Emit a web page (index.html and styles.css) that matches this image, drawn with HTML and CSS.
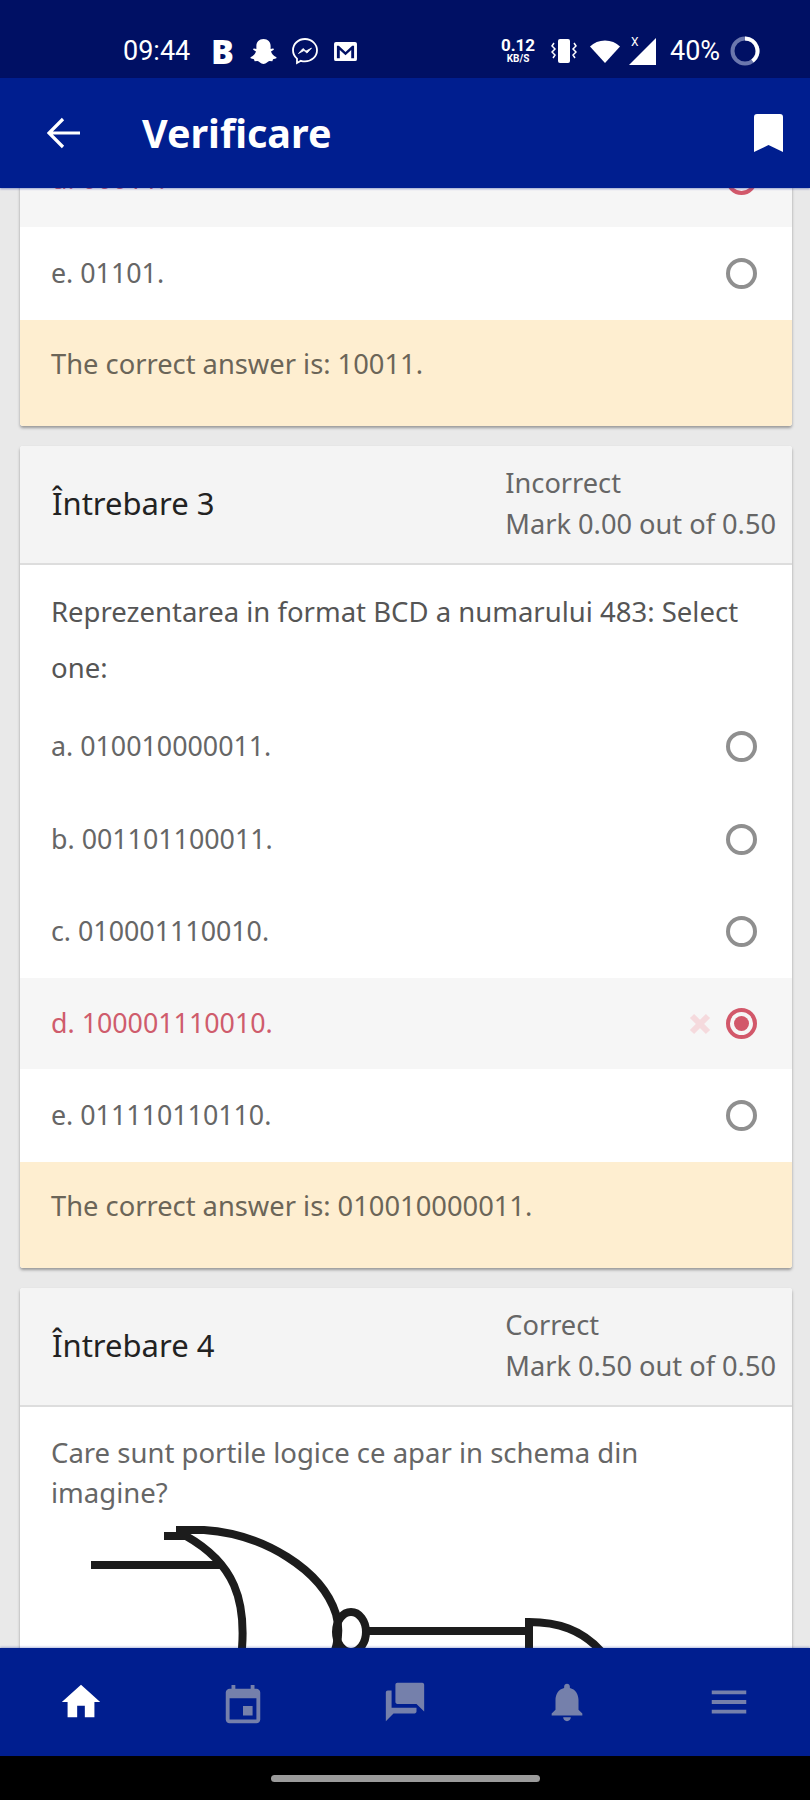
FILE: index.html
```html
<!DOCTYPE html>
<html lang="ro">
<head>
    <meta charset="UTF-8">
    <meta name="viewport" content="width=device-width, initial-scale=1.0">
    <title>Verificare</title>
    <link rel="stylesheet" href="styles.css">
</head>
<body>
    <!-- Bara de stare -->
    <div class="status-bar">
        <span class="clock">09:44</span>
        <span class="letter-b">B</span>
        <svg class="st-snap" viewBox="0 0 28 27"><path d="M14 1c4.600 0 7.400 3.300 7.400 7.300v3.200l2.300-.6c1-.2 1.500 1 .6 1.600l-2.500 1.500c.8 2.600 2.700 4.800 5.200 5.700.9.400.6 1.300-.3 1.600l-2.800.8-.7 2-3-.2c-1.600.2-3.200 2.900-6.200 3.100-3-.2-4.600-2.900-6.200-3.100l-3 .2-.7-2-2.800-.8c-.9-.3-1.200-1.200-.3-1.600 2.500-.9 4.400-3.100 5.200-5.700l-2.500-1.500c-.9-.6-.4-1.800.6-1.600l2.300.6V8.300C6.600 4.300 9.400 1 14 1z" fill="#fff"/></svg>
        <svg class="st-msg" viewBox="0 0 28 28"><path d="M14 2C7.300 2 2 6.900 2 13.300c0 3.400 1.500 6.300 4 8.300V26l3.900-2.200c1.300.4 2.700.6 4.100.6 6.700 0 12-4.900 12-11.100S20.700 2 14 2z" fill="none" stroke="#fff" stroke-width="1.800"/><path d="M7.500 16.500l4.500-5 3 2.600 5.500-3-4.500 5-3-2.600z" fill="#fff" stroke="#fff" stroke-width=".8"/></svg>
        <svg class="st-mail" viewBox="0 0 26 22"><path d="M3 1h20a2 2 0 0 1 2 2v16a2 2 0 0 1-2 2H3a2 2 0 0 1-2-2V3a2 2 0 0 1 2-2zm1 4v13h3V9.500l6 5.500 6-5.500V18h3V5h-2l-7 6.500L6 5z" fill="#fff" fill-rule="evenodd"/></svg>

        <span class="net-speed"><b>0.12</b><i>KB/S</i></span>
        <svg class="st-vib" viewBox="0 0 26 24"><rect x="7" y="0" width="12" height="24" rx="2" fill="#fff"/><path d="M3 4L1 7l3 3-3 3 3 3-2 3M23 4l2 3-3 3 3 3-3 3 2 3" fill="none" stroke="#fff" stroke-width="1.500"/></svg>
        <svg class="st-wifi" viewBox="0 0 30 23"><path d="M0 6.500C4 2.500 9 .5 15 .5s11 2 15 6L15 23z" fill="#fff"/></svg>
        <span class="st-signal">
            <svg viewBox="0 0 27 27"><path d="M27 0v27H0z" fill="#fff"/></svg>
            <span class="st-x">X</span>
        </span>
        <span class="battery">40%</span>
        <svg class="st-ring" viewBox="0 0 30 30"><circle cx="15" cy="15" r="12.500" fill="none" stroke="#6b77ad" stroke-width="4"/><path d="M15 2.500A12.500 12.500 0 0 1 22.500 25" fill="none" stroke="#fff" stroke-width="4"/></svg>
    </div>

    <!-- Bara de titlu -->
    <header class="app-bar">
        <svg class="back-icon" viewBox="0 0 33 32"><path d="M33 16H3M16 2L2 16l14 14" fill="none" stroke="#fff" stroke-width="3.200"/></svg>
        <h1>Verificare</h1>
        <svg class="bookmark-icon" viewBox="0 0 29 38"><path d="M3 0h23a3 3 0 0 1 3 3v35l-14.500-7L0 38V3a3 3 0 0 1 3-3z" fill="#fff"/></svg>
    </header>

    <main class="content">
        <!-- Intrebarea 2, capatul de jos -->
        <section class="card card-cut">
            <div class="option wrong">
                <span>d. 00011.</span>
                <span class="radio checked"></span>
            </div>
            <div class="option">
                <span>e. 01101.</span>
                <span class="radio"></span>
            </div>
            <div class="feedback">The correct answer is: 10011.</div>
        </section>

        <section class="card">
            <div class="card-header">
                <h2>Întrebare 3</h2>
                <div class="grade">
                    <div class="state">Incorrect</div>
                    <div>Mark 0.00 out of 0.50</div>
                </div>
            </div>
            <p class="question">Reprezentarea in format BCD a numarului 483: Select one:</p>
            <div class="option">
                <span>a. 010010000011.</span>
                <span class="radio"></span>
            </div>
            <div class="option">
                <span>b. 001101100011.</span>
                <span class="radio"></span>
            </div>
            <div class="option">
                <span>c. 010001110010.</span>
                <span class="radio"></span>
            </div>
            <div class="option wrong">
                <span>d. 100001110010.</span>
                <svg class="x-mark" viewBox="0 0 22 22"><path d="M3 3l16 16M19 3L3 19" stroke="#f5dadd" stroke-width="6"/></svg>
                <span class="radio checked"></span>
            </div>
            <div class="option">
                <span>e. 011110110110.</span>
                <span class="radio"></span>
            </div>
            <div class="feedback">The correct answer is: 010010000011.</div>
        </section>

        <section class="card">
            <div class="card-header">
                <h2>Întrebare 4</h2>
                <div class="grade">
                    <div class="state">Correct</div>
                    <div>Mark 0.50 out of 0.50</div>
                </div>
            </div>
            <p class="question tight">Care sunt portile logice ce apar in schema din imagine?</p>
            <!-- schema cu portile logice -->
            <svg class="gates" viewBox="0 0 774 200">
                <g fill="none" stroke="#1c1c1c" stroke-width="8">
                    <path d="M71 49H202"/>
                    <path d="M144 20h22c46 26 64 62 54 130"/>
                    <path d="M156 14h28c60 4 118 40 132 84 6 22 0 40-14 62"/>
                    <ellipse cx="331" cy="116" rx="15" ry="20"/>
                    <path d="M347 115H507"/>
                    <path d="M509 160V106c26 0 54 6 76 34"/>
                </g>
            </svg>
        </section>
    </main>

    <nav class="bottom-nav">
        <div class="nav-item active">
            <svg viewBox="0 0 24 24"><path d="M10 20v-6h4v6h5v-8h3L12 3 2 12h3v8z"/></svg>
        </div>
        <div class="nav-item">
            <svg class="cal" viewBox="0 0 24 24"><path d="M17 12h-5v5h5v-5zM16 1v2H8V1H6v2H5c-1.110 0-1.990.9-1.990 2L3 19c0 1.100.89 2 2 2h14c1.100 0 2-.9 2-2V5c0-1.100-.9-2-2-2h-1V1h-2zm3 18H5V8h14v11z"/></svg>
        </div>
        <div class="nav-item">
            <svg class="flip" viewBox="0 0 24 24"><path d="M21 6h-2v9H6v2c0 .55.45 1 1 1h11l4 4V7c0-.55-.45-1-1-1zm-4 6V3c0-.55-.45-1-1-1H3c-.55 0-1 .45-1 1v14l4-4h10c.55 0 1-.45 1-1z"/></svg>
        </div>
        <div class="nav-item">
            <svg viewBox="0 0 24 24"><path d="M12 22c1.100 0 2-.9 2-2h-4c0 1.100.89 2 2 2zm6-6v-5c0-3.070-1.640-5.640-4.500-6.320V4c0-.83-.67-1.500-1.500-1.500s-1.500.67-1.500 1.500v.68C7.630 5.360 6 7.920 6 11v5l-2 2v1h16v-1l-2-2z"/></svg>
        </div>
        <div class="nav-item">
            <svg viewBox="0 0 24 24"><path d="M3 18h18v-2H3v2zm0-5h18v-2H3v2zm0-7v2h18V6H3z"/></svg>
        </div>
    </nav>

    <div class="gesture-bar"><span class="home-pill"></span></div>
</body>
</html>
```

FILE: styles.css
```css
* {
    box-sizing: border-box;
}

body {
    margin: 0;
    width: 810px;
    height: 1800px;
    overflow: hidden;
    display: flex;
    flex-direction: column;
    font-family: "Noto Sans", sans-serif;
    background-color: #e9e9e9;
    color: #666;
}

/* Bara de stare */
.status-bar {
    height: 78px;
    flex: none;
    padding: 24px 50px 0 123px;
    display: flex;
    align-items: center;
    background-color: #001064;
    color: #fff;
    font-family: Roboto, sans-serif;
}

.clock {
    font-size: 27px;
    width: 68px;
}

.letter-b {
    margin-left: 20px;
    font-size: 34px;
    font-weight: 900;
    font-family: "Noto Sans", sans-serif;
    line-height: 1;
}

.st-snap {
    width: 27px;
    height: 26px;
    margin-left: 16px;
}

.st-msg {
    width: 28px;
    height: 28px;
    margin-left: 14px;
}

.st-mail {
    width: 25px;
    height: 21px;
    margin-left: 14px;
}

.net-speed {
    margin-left: auto;
    width: 34px;
    display: flex;
    flex-direction: column;
    align-items: center;
    color: #fff;
}

.net-speed b {
    font-size: 17px;
    line-height: 15px;
}

.net-speed i {
    font-size: 10px;
    font-style: normal;
    font-weight: 700;
    line-height: 12px;
}

.st-vib {
    width: 26px;
    height: 24px;
    margin-left: 16px;
}

.st-wifi {
    width: 30px;
    height: 23px;
    margin-left: 13px;
}

.st-signal {
    position: relative;
    width: 27px;
    height: 27px;
    margin-left: 9px;
}

.st-signal svg {
    display: block;
    width: 27px;
    height: 27px;
}

.st-x {
    position: absolute;
    left: 2px;
    top: -3px;
    font-size: 12px;
    line-height: 14px;
}

.battery {
    margin-left: 14px;
    font-size: 27px;
    width: 60px;
}

.st-ring {
    width: 30px;
    height: 30px;
}

/* Bara de titlu */
.app-bar {
    height: 110px;
    flex: none;
    position: relative;
    z-index: 2;
    padding: 0 27px 0 47px;
    display: flex;
    align-items: center;
    background-color: #001e8f;
    box-shadow: 0 1px 2px rgba(0, 30, 143, 0.4);
}

.back-icon {
    width: 33px;
    height: 32px;
}

.app-bar h1 {
    margin: 0 auto 0 62px;
    font-size: 39.500px;
    font-weight: 700;
    color: #fff;
}

.bookmark-icon {
    width: 29px;
    height: 38px;
}

/* Continut */
.content {
    flex: 1;
    min-height: 0;
    overflow: hidden;
    padding: 0 18px 0 20px;
}

.card {
    margin-bottom: 20px;
    background-color: #fff;
    border-radius: 3px;
    box-shadow: 0 2px 3px rgba(0, 0, 0, 0.35);
    font-size: 27.200px;
}

.card-cut {
    margin-top: -52px;
}

.card-cut .option.wrong {
    padding-bottom: 5px;
}

.card-header {
    height: 119px;
    padding: 0 16px 2px 32px;
    display: flex;
    align-items: center;
    justify-content: space-between;
    background-color: #f4f4f4;
    border-bottom: 2px solid #ddd;
    border-radius: 3px 3px 0 0;
}

.card-header h2 {
    margin: 0;
    font-size: 31px;
    font-weight: 400;
    color: #222;
}

.grade {
    line-height: 41px;
}

.question {
    margin: 0;
    padding: 19px 40px 5px 31px;
    line-height: 56px;
    font-size: 27.500px;
    color: #555;
}

.question.tight {
    line-height: 40px;
    padding: 26px 100px 3px 31px;
    color: #666;
}

.option {
    height: 92.500px;
    padding: 0 35px 0 31px;
    display: flex;
    align-items: center;
    font-size: 26.800px;
}

.option > span:first-child {
    margin: 0 auto 2px 0;
}

.option.wrong {
    height: 91px;
    background-color: #f6f6f6;
    color: #cf5c6c;
}

.radio {
    width: 31px;
    height: 31px;
    border: 4px solid #8f8f8f;
    border-radius: 50%;
}

.radio.checked {
    border-color: #d2586a;
    position: relative;
}

.radio.checked::after {
    content: "";
    position: absolute;
    top: 4px;
    left: 4px;
    width: 15px;
    height: 15px;
    border-radius: 50%;
    background-color: #d2586a;
}

.x-mark {
    width: 22px;
    height: 22px;
    margin-right: 15px;
}

.feedback {
    height: 106px;
    padding: 19px 31px 0;
    line-height: 49px;
    font-size: 27.300px;
    background-color: #feeed0;
    color: #6b6558;
    border-radius: 0 0 3px 3px;
}

.gates {
    display: block;
    width: 774px;
    height: 200px;
}

/* Meniul de jos */
.bottom-nav {
    height: 108px;
    flex: none;
    position: relative;
    z-index: 2;
    display: flex;
    background-color: #001e8f;
    box-shadow: 0 -1px 2px rgba(0, 30, 143, 0.3);
}

.nav-item {
    flex: 1;
    display: flex;
    align-items: center;
    justify-content: center;
}

.nav-item svg {
    width: 46px;
    height: 46px;
    fill: #7580ab;
}

.nav-item.active svg {
    fill: #fff;
}

.nav-item svg.cal {
    margin-top: 7px;
}

.nav-item svg.flip {
    transform: scaleX(-1);
}

.gesture-bar {
    height: 44px;
    flex: none;
    display: flex;
    align-items: center;
    justify-content: center;
    background-color: #000;
}

.home-pill {
    width: 269px;
    height: 7px;
    border-radius: 4px;
    background-color: #9b9b9b;
}
```
